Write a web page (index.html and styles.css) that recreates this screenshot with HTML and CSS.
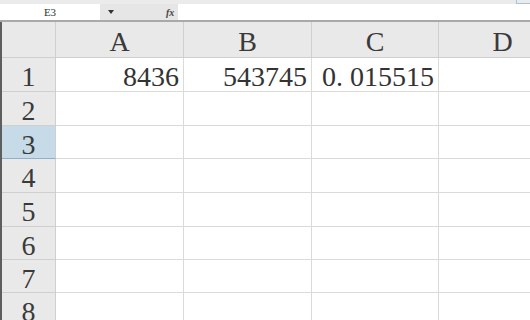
FILE: index.html
```
<!DOCTYPE html>
<html lang="en">
<head>
    <meta charset="UTF-8">
    <title>Sheet1</title>
    <link rel="stylesheet" href="styles.css">
</head>
<body>
    <div class="formula-row">
        <div class="name-box">E3</div>
        <div class="name-tools">
            <span class="drop-arrow"></span>
            <span class="fx">fx</span>
        </div>
        <div class="formula-input"></div>
        <div class="corner-btn"></div>
    </div>
    <div class="sheet">
        <div class="hdr corner"></div>
        <div class="hdr col">A</div>
        <div class="hdr col">B</div>
        <div class="hdr col">C</div>
        <div class="hdr col">D</div>

        <div class="hdr rownum">1</div>
        <div class="cell num">8436</div>
        <div class="cell num">543745</div>
        <div class="cell num">0. 015515</div>
        <div class="cell"></div>

        <div class="hdr rownum">2</div>
        <div class="cell"></div><div class="cell"></div><div class="cell"></div><div class="cell"></div>

        <div class="hdr rownum active">3</div>
        <div class="cell"></div><div class="cell"></div><div class="cell"></div><div class="cell"></div>

        <div class="hdr rownum">4</div>
        <div class="cell"></div><div class="cell"></div><div class="cell"></div><div class="cell"></div>

        <div class="hdr rownum">5</div>
        <div class="cell"></div><div class="cell"></div><div class="cell"></div><div class="cell"></div>

        <div class="hdr rownum">6</div>
        <div class="cell"></div><div class="cell"></div><div class="cell"></div><div class="cell"></div>

        <div class="hdr rownum">7</div>
        <div class="cell"></div><div class="cell"></div><div class="cell"></div><div class="cell"></div>

        <div class="hdr rownum">8</div>
        <div class="cell"></div><div class="cell"></div><div class="cell"></div><div class="cell"></div>
    </div>
</body>
</html>
```

FILE: styles.css
```
body {
    margin: 0;
    width: 530px;
    height: 320px;
    overflow: hidden;
    background: #ffffff;
    font-family: "Liberation Serif", "DejaVu Serif", serif;
    color: #2e2e2e;
}
.formula-row {
    display: flex;
    height: 22px;
    padding-top: 4px;
    box-sizing: border-box;
    background-color: #ebebeb;
    border-bottom: 2px solid #a9a9a9;
    position: relative;
}
.name-box {
    width: 100px;
    background-color: #ffffff;
    font-size: 11px;
    line-height: 16px;
    text-align: center;
    color: #333;
}
.name-tools {
    width: 78px;
    display: flex;
    align-items: center;
    background-color: #e6e6e6;
}
.drop-arrow {
    margin-left: 8px;
    width: 0;
    height: 0;
    border-left: 3px solid transparent;
    border-right: 3px solid transparent;
    border-top: 4px solid #333;
}
.fx {
    margin-left: 52px;
    font-size: 10px;
    font-style: italic;
    font-weight: bold;
    color: #444;
}
.formula-input {
    flex: 1;
    background-color: #ffffff;
}
.corner-btn {
    position: absolute;
    right: -4px;
    top: 0;
    width: 16px;
    height: 3px;
    border: 1px solid #a9c4d8;
    border-top: none;
}
.sheet {
    display: grid;
    grid-template-columns: 54px 128px 128px 127px 128px;
    grid-template-rows: 36px 34px 34px 33px 34px 34px 33px 33px 34px;
    border-left: 2px solid #5e5e5e;
    width: 528px;
    overflow: hidden;
}
.hdr {
    background-color: #e9e9e9;
    border-right: 1px solid #cfcfcf;
    border-bottom: 1px solid #cfcfcf;
    display: flex;
    align-items: center;
    justify-content: center;
    padding-top: 5px;
    box-sizing: border-box;
    font-size: 28px;
    color: #3a3a3a;
}
.corner {
    padding: 0;
}
.rownum.active {
    background-color: #c6dae8;
    border-bottom: 1px solid #8fb0c8;
}
.cell {
    border-right: 1px solid #dadada;
    border-bottom: 1px solid #dadada;
    box-sizing: border-box;
}
.num {
    display: flex;
    align-items: center;
    justify-content: flex-end;
    padding: 5px 4px 0 0;
    font-size: 28px;
    color: #333;
    white-space: nowrap;
}
```
